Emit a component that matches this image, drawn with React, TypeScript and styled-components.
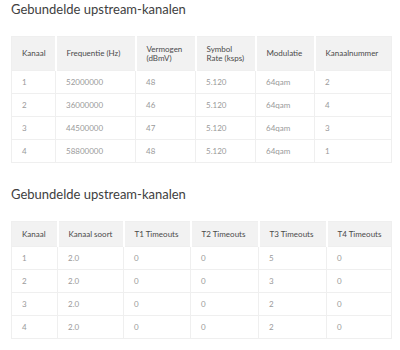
import React from "react"
import styled, { createGlobalStyle } from "styled-components"

const GlobalStyle = createGlobalStyle`
  body {
    margin: 0;
    background: #fff;
    font-family: Lato, "Open Sans", sans-serif;
  }
`

const Page = styled.div`
  width: 380px;
  padding: 0 9px 0 11px;
`

const Title = styled.h2<{ $top: number }>`
  margin: ${({ $top }) => $top}px 0 18px 0;
  font-size: 13px;
  line-height: 18px;
  font-weight: 400;
  color: #404040;
`

const Table = styled.table`
  width: 380px;
  table-layout: fixed;
  border-collapse: collapse;
  border: 1px solid #efefef;
  font-size: 8px;
`

const Th = styled.th<{ $h: number }>`
  height: ${({ $h }) => $h}px;
  padding: 0 2px 0 10px;
  background: #f2f2f2;
  border-left: 2px solid #fff;
  text-align: left;
  font-weight: 400;
  color: #4a4a4a;
  line-height: 9px;
  white-space: nowrap;
  &:first-child {
    border-left: none;
  }
`

const Td = styled.td`
  height: 22px;
  padding: 0 2px 0 10px;
  border: 1px solid #efefef;
  color: #9a9a9a;
`

type TableProps = {
  widths: number[]
  headers: React.ReactNode[]
  rows: string[][]
  headHeight: number
}

const DataTable = ({ widths, headers, rows, headHeight }: TableProps) => (
  <Table>
    <colgroup>
      {widths.map((w, i) => (
        <col key={i} style={{ width: w }} />
      ))}
    </colgroup>
    <thead>
      <tr>
        {headers.map((h, i) => (
          <Th key={i} $h={headHeight}>{h}</Th>
        ))}
      </tr>
    </thead>
    <tbody>
      {rows.map((r, i) => (
        <tr key={i}>
          {r.map((c, j) => (
            <Td key={j}>{c}</Td>
          ))}
        </tr>
      ))}
    </tbody>
  </Table>
)

const upstream = [
  ["1", "52000000", "48", "5.120", "64qam", "2"],
  ["2", "36000000", "46", "5.120", "64qam", "4"],
  ["3", "44500000", "47", "5.120", "64qam", "3"],
  ["4", "58800000", "48", "5.120", "64qam", "1"],
]

const timeouts = [
  ["1", "2.0", "0", "0", "5", "0"],
  ["2", "2.0", "0", "0", "3", "0"],
  ["3", "2.0", "0", "0", "2", "0"],
  ["4", "2.0", "0", "0", "2", "0"],
]

export default function App() {
  return (
    <Page>
      <GlobalStyle />
      <Title $top={0}>Gebundelde upstream-kanalen</Title>
      <DataTable
        widths={[44, 80, 60, 60, 59, 77]}
        headHeight={33}
        headers={[
          "Kanaal",
          "Frequentie (Hz)",
          <>Vermogen<br />(dBmV)</>,
          <>Symbol<br />Rate (ksps)</>,
          "Modulatie",
          "Kanaalnummer",
        ]}
        rows={upstream}
      />
      <Title $top={22}>Gebundelde upstream-kanalen</Title>
      <DataTable
        widths={[46, 66, 67, 68, 68, 65]}
        headHeight={24}
        headers={["Kanaal", "Kanaal soort", "T1 Timeouts", "T2 Timeouts", "T3 Timeouts", "T4 Timeouts"]}
        rows={timeouts}
      />
    </Page>
  )
}
